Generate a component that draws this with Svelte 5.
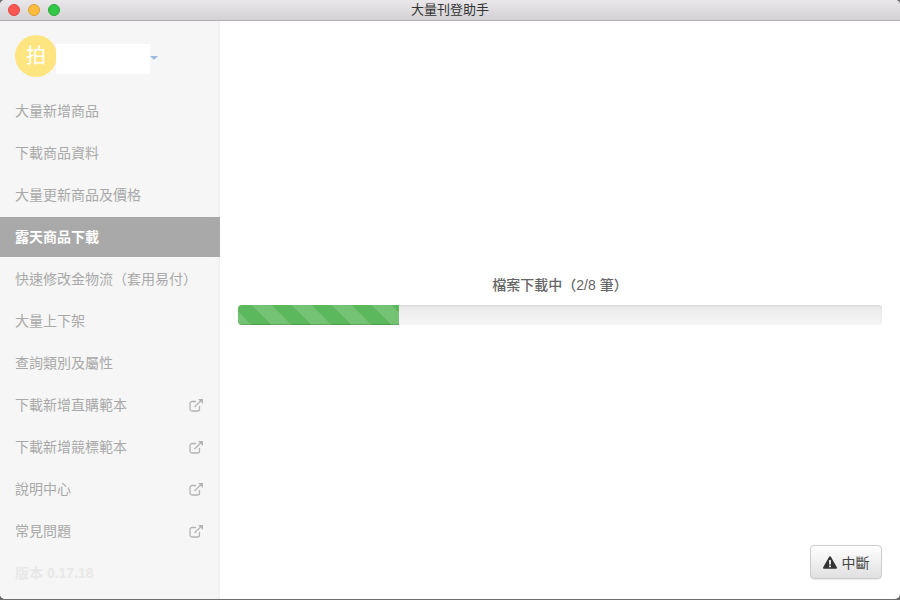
<script>
	const items = [
		{ label: '大量新增商品' },
		{ label: '下載商品資料' },
		{ label: '大量更新商品及價格' },
		{ label: '露天商品下載', active: true },
		{ label: '快速修改金物流（套用易付）' },
		{ label: '大量上下架' },
		{ label: '查詢類別及屬性' },
		{ label: '下載新增直購範本', external: true },
		{ label: '下載新增競標範本', external: true },
		{ label: '說明中心', external: true },
		{ label: '常見問題', external: true }
	];
</script>

<div class="window">
	<header class="titlebar">
		<div class="lights">
			<span class="light red"></span>
			<span class="light yellow"></span>
			<span class="light green"></span>
		</div>
		<div class="title">大量刊登助手</div>
	</header>

	<div class="body">
		<aside class="sidebar">
			<div class="account">
				<div class="avatar">拍</div>
				<div class="name"></div>
				<span class="caret"></span>
			</div>
			<nav class="menu">
				{#each items as item}
					<div class="item" class:active={item.active}>
						<span class="text">{item.label}</span>
						{#if item.external}
							<svg class="ext" width="15" height="14" viewBox="0 0 15 14" fill="none" stroke="#b4b4b4" stroke-width="1.3">
								<path d="M10.5 8v3a2 2 0 0 1-2 2H3a2 2 0 0 1-2-2V5.5a2 2 0 0 1 2-2h4" />
								<path d="M5.5 9 12.5 2" />
								<path d="M9 1h5v5" fill="#b4b4b4" stroke="none" />
							</svg>
						{/if}
					</div>
				{/each}
				<div class="item version"><span class="text">版本 0.17.18</span></div>
			</nav>
		</aside>

		<main class="content">
			<div class="progress-area">
				<div class="label">檔案下載中（2/8 筆）</div>
				<div class="track">
					<div class="fill" style="width: 25%"></div>
				</div>
			</div>
			<div class="actions">
				<button class="stop">
					<svg width="14" height="13" viewBox="0 0 14 13">
						<path d="M7 .3c.4 0 .7.2.9.5l5.900 10.400c.4.7-.1 1.600-.9 1.600H1.100c-.8 0-1.300-.9-.9-1.600L6.100.8C6.300.5 6.600.3 7 .3z" fill="#333" />
						<rect x="6.100" y="4" width="1.800" height="4.500" fill="#f0f0f0" />
						<rect x="6.100" y="9.500" width="1.800" height="1.800" fill="#f0f0f0" />
					</svg>
					<span class="btn-text">中斷</span>
				</button>
			</div>
		</main>
	</div>
</div>

<style>
	:global(body) {
		margin: 0;
		background: #6d6d6d;
		overflow: hidden;
	}

	.window {
		width: 900px;
		height: 599px;
		display: flex;
		flex-direction: column;
		background: #fff;
		border-radius: 5px;
		overflow: hidden;
		font-family: 'Liberation Sans', 'Noto Sans CJK TC', sans-serif;
		box-shadow: 0 1px 0 #555;
	}

	.titlebar {
		height: 20px;
		flex: none;
		display: flex;
		align-items: center;
		position: relative;
		background: linear-gradient(#e9e7e9, #d3d1d3);
		border-bottom: 1px solid #b1afb1;
	}

	.lights {
		display: flex;
		gap: 8px;
		padding-left: 8px;
	}

	.light {
		width: 12px;
		height: 12px;
		border-radius: 50%;
		box-sizing: border-box;
	}

	.red {
		background: #fc5753;
		border: 1px solid #df4744;
	}

	.yellow {
		background: #fdbc40;
		border: 1px solid #de9f34;
	}

	.green {
		background: #33c748;
		border: 1px solid #27aa35;
	}

	.title {
		position: absolute;
		left: 0;
		right: 0;
		text-align: center;
		font-size: 13px;
		line-height: 20px;
		color: #333;
	}

	.body {
		flex: 1;
		display: flex;
		min-height: 0;
	}

	.sidebar {
		width: 220px;
		flex: none;
		background: #f6f6f6;
		box-shadow: inset -4px 0 4px -3px #ededed;
		box-sizing: border-box;
		padding-top: 14px;
	}

	.account {
		display: flex;
		align-items: center;
		padding-left: 15px;
		height: 42px;
	}

	.avatar {
		width: 42px;
		height: 42px;
		border-radius: 50%;
		background: #ffe57f;
		color: #fff;
		font-size: 20px;
		line-height: 42px;
		text-align: center;
		flex: none;
	}

	.name {
		width: 94px;
		height: 30px;
		margin-left: -1px;
		margin-top: 5px;
		background: #fff;
	}

	.caret {
		width: 0;
		height: 0;
		margin-top: 3px;
		border-left: 4px solid transparent;
		border-right: 4px solid transparent;
		border-top: 4px solid #9dbbdc;
	}

	.menu {
		margin-top: 14px;
		display: flex;
		flex-direction: column;
		gap: 2px;
	}

	.item {
		height: 40px;
		display: flex;
		align-items: center;
		justify-content: space-between;
		padding: 0 16px 0 15px;
		font-size: 14px;
		color: #a9a9a9;
	}

	.text {
		line-height: 20px;
	}

	.item.active {
		background: #a9a9a9;
		color: #fff;
		font-weight: 700;
	}

	.item.version {
		color: #e8e8e8;
		font-weight: 700;
	}

	.ext {
		flex: none;
	}

	.content {
		flex: 1;
		position: relative;
		display: flex;
		flex-direction: column;
		justify-content: flex-end;
		padding: 0 18px 20px;
	}

	.progress-area {
		position: absolute;
		left: 18px;
		right: 18px;
		top: 254px;
	}

	.label {
		text-align: center;
		font-size: 14px;
		line-height: 20px;
		color: #666;
		font-weight: 500;
		margin-bottom: 10px;
	}

	.track {
		height: 20px;
		border-radius: 4px;
		background: linear-gradient(#ebebeb, #f5f5f5);
		box-shadow: inset 0 1px 2px rgba(0, 0, 0, 0.1);
		overflow: hidden;
	}

	.fill {
		height: 100%;
		background-color: #5cb85c;
		background-image: linear-gradient(
			45deg,
			rgba(255, 255, 255, 0.15) 25%,
			transparent 25%,
			transparent 50%,
			rgba(255, 255, 255, 0.15) 50%,
			rgba(255, 255, 255, 0.15) 75%,
			transparent 75%,
			transparent
		);
		background-size: 40px 40px;
		background-position: 14px 0;
		box-shadow: inset 0 -1px 0 rgba(0, 0, 0, 0.15);
	}

	.actions {
		display: flex;
		justify-content: flex-end;
	}

	.stop {
		width: 72px;
		height: 34px;
		display: flex;
		align-items: center;
		justify-content: center;
		gap: 5px;
		padding: 0;
		border: 1px solid #ccc;
		border-radius: 4px;
		background: linear-gradient(#fff, #e0e0e0);
		box-shadow: 0 1px 1px rgba(0, 0, 0, 0.08);
		font-family: inherit;
		font-size: 14px;
		color: #444;
	}

	.btn-text {
		margin-bottom: 1px;
	}
</style>
